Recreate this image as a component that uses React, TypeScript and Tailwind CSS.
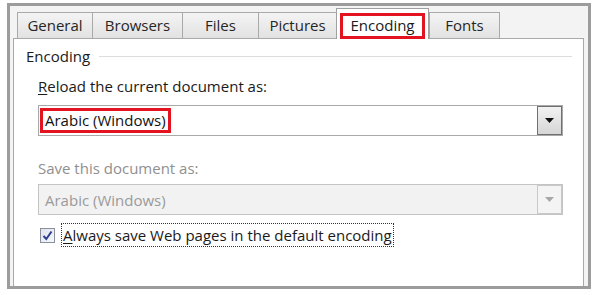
const tabs = ["General", "Browsers", "Files", "Pictures", "Encoding", "Fonts"];
const tabWidths: Record<string, string> = {
  General: "w-[75px]",
  Browsers: "w-[90px]",
  Files: "w-[76px]",
  Pictures: "w-[78px]",
  Encoding: "w-[93px]",
  Fonts: "w-[71px]",
};

function DropArrow({ disabled = false }: { disabled?: boolean }) {
  return (
    <svg width="9" height="5" viewBox="0 0 9 5">
      <path d="M0 0h9L4.5 5z" fill={disabled ? "#a8a8a8" : "#111"} />
    </svg>
  );
}

function Combo({ disabled = false, highlight = false }: { disabled?: boolean; highlight?: boolean }) {
  return (
    <div
      className={`flex h-[31px] w-[525px] items-stretch border ${
        disabled ? "border-[#c4c4c4] bg-[#f2f2f2]" : "border-[#a9a9a9] bg-white"
      }`}
    >
      <div className="flex flex-1 items-center pl-[1px]">
        {highlight ? (
          <span className="border-[3px] border-[#e3141f] px-[2px] leading-[19px] text-[#111]">
            Arabic (Windows)
          </span>
        ) : (
          <span className="px-[5px] text-[#9a9a9a]">Arabic (Windows)</span>
        )}
      </div>
      <div
        className={`flex w-[25px] items-center justify-center border ${
          disabled
            ? "border-[#c8c8c8] bg-[#f4f4f4]"
            : "border-[#707070] bg-gradient-to-b from-[#f2f2f2] to-[#d6d6d6]"
        }`}
      >
        <DropArrow disabled={disabled} />
      </div>
    </div>
  );
}

export default function App() {
  return (
    <div
      className="h-[295px] w-[600px] bg-white pl-[7px] pt-[3px] text-[15px] leading-[20px] text-[#1a1a1a]"
      style={{ fontFamily: '"Open Sans", "Noto Sans", sans-serif' }}
    >
      <div className="flex h-[286px] w-[584px] flex-col border-[3px] border-[#9c9c9c] bg-[#f3f3f3] pl-[3px] pr-[4px]">
        {/* tab strip */}
        <div className="flex h-[32px] items-end pl-[4px]">
          {tabs.map((t) => {
            const active = t === "Encoding";
            return active ? (
              <div
                key={t}
                className={`relative z-10 -mb-[1px] flex h-[31px] ${tabWidths[t]} items-end border border-b-0 border-[#a0a0a0] bg-white px-[3px]`}
              >
                <div className="flex h-[26px] w-full items-center justify-center border-[3px] border-[#e3141f] pb-[2px]">
                  {t}
                </div>
              </div>
            ) : (
              <div
                key={t}
                className={`flex h-[26px] ${tabWidths[t]} items-center justify-center border border-b-0 border-r-0 border-[#a9a9a9] bg-gradient-to-b from-[#f4f4f4] to-[#e2e2e2] pb-[2px] text-[#262626] last:border-r`}
              >
                {t}
              </div>
            );
          })}
        </div>

        {/* panel */}
        <div className="flex flex-1 flex-col border border-b-0 border-[#a9a9a9] bg-white pl-[12px]">
          <div className="mt-[7px] flex h-[20px] items-center">
            <span>Encoding</span>
            <div className="ml-[9px] mr-[11px] h-px flex-1 bg-[#dcdcdc]" />
          </div>

          <div className="ml-[12px] mt-[10px] flex flex-col">
            <div className="h-[20px]">
              <span className="underline decoration-1 underline-offset-2">R</span>eload the current document as:
            </div>
            <div className="mt-[9px]">
              <Combo highlight />
            </div>

            <div className="mt-[22px] h-[20px] text-[#8f8f8f]">Save this document as:</div>
            <div className="mt-[6px]">
              <Combo disabled />
            </div>

            <div className="mt-[8px] flex items-center">
              <div className="ml-[2px] flex h-[15px] w-[15px] items-center justify-center border border-[#8a8f9c] bg-gradient-to-br from-[#dfe3ee] to-[#f7f8fb]">
                <svg width="11" height="11" viewBox="0 0 11 11">
                  <path d="M1.5 6 L4.3 9 L9.5 1.5" fill="none" stroke="#2a3f8f" strokeWidth="2" />
                </svg>
              </div>
              <div className="ml-[6px] flex h-[24px] items-center border border-dotted border-[#333] px-[1px]">
                <span className="underline decoration-1 underline-offset-2">A</span>lways save Web pages in the default encoding
              </div>
            </div>
          </div>
        </div>
      </div>
    </div>
  );
}
